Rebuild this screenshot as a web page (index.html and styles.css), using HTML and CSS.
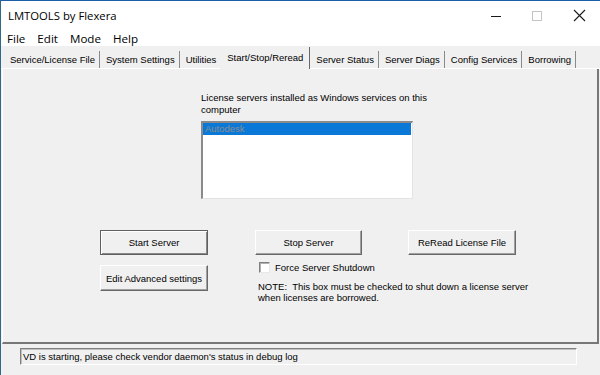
FILE: index.html
```html
<!DOCTYPE html>
<html>
<head>
<meta charset="utf-8">
<link rel="stylesheet" href="styles.css">
</head>
<body>
<div class="window">
  <div class="titlebar">
    <span class="title">LMTOOLS by Flexera</span>
    <div class="controls">
      <span class="ctl"><svg width="12" height="12" viewBox="0 0 12 12"><line x1="1" y1="6.5" x2="11" y2="6.5" stroke="#1a1a1a" stroke-width="1"/></svg></span>
      <span class="ctl"><svg width="12" height="12" viewBox="0 0 12 12"><rect x="1.5" y="1.5" width="9" height="9" fill="none" stroke="#c4c4c4" stroke-width="1"/></svg></span>
      <span class="ctl"><svg width="13" height="13" viewBox="0 0 13 13"><path d="M1 1 L12 12 M12 1 L1 12" stroke="#1a1a1a" stroke-width="1.1"/></svg></span>
    </div>
  </div>
  <div class="menubar">
    <span>File</span><span>Edit</span><span>Mode</span><span>Help</span>
  </div>
  <div class="tabs">
    <span class="tab">Service/License File</span>
    <span class="tab">System Settings</span>
    <span class="tab nosep">Utilities</span>
    <span class="tab selected">Start/Stop/Reread</span>
    <span class="tab">Server Status</span>
    <span class="tab">Server Diags</span>
    <span class="tab">Config Services</span>
    <span class="tab">Borrowing</span>
  </div>
  <div class="page">
    <div class="listgroup">
      <div class="label">License servers installed as Windows services on this computer</div>
      <div class="listbox">
        <div class="item sel">Autodesk</div>
      </div>
    </div>
    <div class="row1">
      <div class="btn default">Start Server</div>
      <div class="btn stop">Stop Server</div>
      <div class="btn reread">ReRead License File</div>
    </div>
    <div class="row2">
      <div class="btn adv">Edit Advanced settings</div>
      <div class="notecol">
        <label class="check"><span class="box"></span><span>Force Server Shutdown</span></label>
        <div class="note">NOTE:&nbsp; This box must be checked to shut down a license server<br>when licenses are borrowed.</div>
      </div>
    </div>
  </div>
  <div class="status">VD is starting, please check vendor daemon's status in debug log</div>
</div>
</body>
</html>
```
FILE: styles.css
```css
* { box-sizing: border-box; }
html, body { margin: 0; padding: 0; }
body {
  width: 600px;
  height: 375px;
  overflow: hidden;
  background: #f0f0f0;
  font-family: "Liberation Sans", Arial, sans-serif;
  font-size: 9.5px;
  color: #000;
}
.window {
  height: 375px;
  border-top: 1px solid #1c5ea8;
  border-left: 1px solid #2f6a86;
}
.titlebar {
  height: 29px;
  background: #fff;
  display: flex;
  align-items: center;
  padding-left: 7px;
}
.title {
  font-family: "Open Sans", "Noto Sans", sans-serif;
  font-size: 11.3px;
  color: #000;
  padding-bottom: 1px;
}
.controls {
  margin-left: auto;
  display: flex;
  align-items: center;
  height: 29px;
}
.ctl {
  width: 42px;
  display: flex;
  justify-content: center;
  align-items: center;
}
.ctl svg { display: block; }
.controls .ctl:first-child { width: 40px; }
.controls .ctl:last-child { width: 42px; margin-right: 0; }
.menubar {
  height: 16px;
  background: #fff;
  display: flex;
  align-items: center;
  padding-left: 6px;
  gap: 12px;
  font-family: "Open Sans", "Noto Sans", sans-serif;
  font-size: 11.6px;
}
.tabs {
  height: 23px;
  display: flex;
  align-items: flex-end;
  padding-left: 3px;
  border-bottom: 1px solid #fff;
}
.tab {
  height: 17px;
  line-height: 17px;
  padding: 0 4px 0 6px;
  border-right: 1px solid #8a8a8a;
  white-space: nowrap;
}
.tab.nosep { border-right: none; padding-right: 4px; }
.tab.selected {
  height: 22px;
  line-height: 21px;
  margin-bottom: -1px;
  padding: 0 6px 0 7px;
  background: #f0f0f0;
  border-right: 1px solid #696969;
}
.page {
  height: 275px;
  margin-left: 1px;
  width: 597px;
  border-left: 1px solid #fff;
  border-right: 2px solid #777;
  border-bottom: 2px solid #777;
}
.listgroup {
  padding-top: 23px;
  margin-left: 198px;
}
.label {
  width: 232px;
  line-height: 12px;
}
.listbox {
  margin-top: 5px;
  width: 212px;
  height: 78px;
  background: #fff;
  border-top: 2px solid #8a8a8a;
  border-left: 2px solid #8a8a8a;
  border-right: 1px solid #e3e3e3;
  border-bottom: 1px solid #e3e3e3;
  padding-right: 1px;
}
.item {
  height: 12px;
  line-height: 12px;
  padding-left: 2px;
}
.item.sel {
  background: #0a78d6;
  color: #8e8e8e;
}
.row1 {
  display: flex;
  margin-top: 31px;
  padding-left: 97px;
}
.btn {
  height: 25px;
  width: 108px;
  display: flex;
  align-items: center;
  justify-content: center;
  background: #f0f0f0;
  border-top: 1px solid #fff;
  border-left: 1px solid #fff;
  border-right: 1px solid #696969;
  border-bottom: 1px solid #696969;
  box-shadow: inset -1px -1px 0 #a0a0a0;
  white-space: nowrap;
}
.btn.default {
  border: 1px solid #606060;
  box-shadow: inset 1px 1px 0 #fff, inset -1px -1px 0 #888;
}
.btn.stop { margin-left: 47px; width: 107px; }
.btn.reread { margin-left: 46px; }
.row2 {
  display: flex;
  margin-top: 7px;
  padding-left: 97px;
}
.btn.adv {
  margin-top: 3px;
  height: 26px;
}
.notecol {
  margin-left: 50px;
}
.check {
  display: flex;
  align-items: center;
  height: 11px;
}
.box {
  width: 11px;
  height: 11px;
  background: #fff;
  border-top: 1px solid #808080;
  border-left: 1px solid #808080;
  border-right: 1px solid #e8e8e8;
  border-bottom: 1px solid #e8e8e8;
  box-shadow: inset 1px 1px 0 #b0b0b0;
  margin-left: 1px;
  margin-right: 5px;
}
.note {
  margin-top: 8px;
  line-height: 11px;
}
.status {
  margin-top: 4px;
  margin-left: 19px;
  width: 557px;
  height: 17px;
  line-height: 15px;
  padding-left: 2px;
  border-top: 1px solid #808080;
  border-left: 1px solid #808080;
  border-right: 1px solid #fff;
  border-bottom: 1px solid #fff;
  box-shadow: inset 1px 1px 0 #c0c0c0;
}
```
